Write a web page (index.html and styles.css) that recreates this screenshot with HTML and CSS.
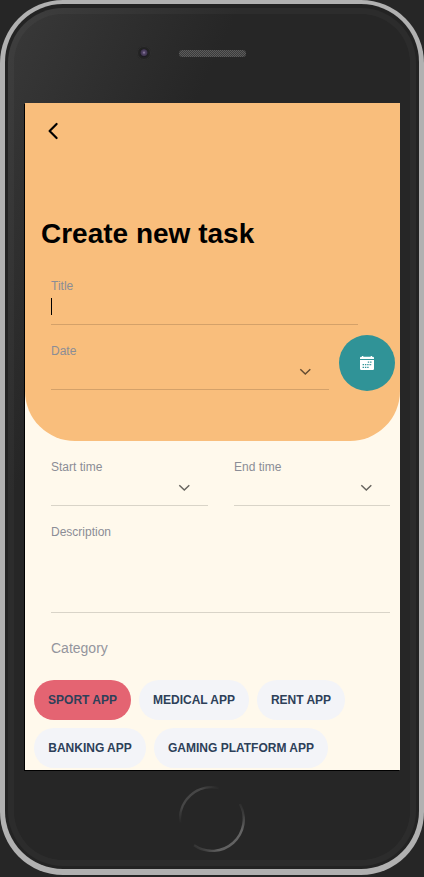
FILE: index.html
```html
<!DOCTYPE html>
<html lang="en">
<head>
<meta charset="utf-8">
<title>Create new task</title>
<link rel="stylesheet" href="styles.css">
</head>
<body>
<div class="phone">
  <div class="rim">
    <div class="body">
      <div class="top-bezel">
        <span class="camera"></span>
        <span class="speaker"></span>
      </div>
      <main class="screen">
        <header class="hero">
          <svg class="back" viewBox="0 0 12 18" fill="none" stroke="#000" stroke-width="2.2" stroke-linecap="round" stroke-linejoin="round"><path d="M9.6 2 L2.6 9 L9.6 16"/></svg>
          <h1>Create new task</h1>
          <div class="field title-field"><label>Title</label><span class="caret"></span></div>
          <div class="date-row">
            <div class="field select date-field"><label>Date</label>
              <svg class="chevron" viewBox="0 0 12 8"><path d="M1.3 1.3 L6.3 6 L11.3 1.3"/></svg></div>
            <button class="calendar" aria-label="Pick date">
              <svg viewBox="0 0 14 14"><path fill="#fff" d="M1.2.8H2V0h1.3v.8h7.4V0H12v.8h.8Q14 .8 14 2v1H0V2Q0 .8 1.2.8ZM0 4h14v8.8q0 1.2-1.2 1.2H1.2Q0 14 0 12.8Z"/><path stroke="#309397" stroke-width="1.3" stroke-dasharray="1.4 .9" d="M7.8 6.1H12M2.6 8.7H12M2.6 11.3H9.5"/></svg>
            </button>
          </div>
        </header>
        <section class="details">
          <div class="times">
            <div class="field select"><label>Start time</label>
              <svg class="chevron" viewBox="0 0 12 8"><path d="M1.3 1.3 L6.3 6 L11.3 1.3"/></svg></div>
            <div class="field select"><label>End time</label>
              <svg class="chevron" viewBox="0 0 12 8"><path d="M1.3 1.3 L6.3 6 L11.3 1.3"/></svg></div>
          </div>
          <div class="field description"><label>Description</label></div>
          <p class="category">Category</p>
          <div class="chips">
            <span class="chip active sport">SPORT APP</span>
            <span class="chip medical">MEDICAL APP</span>
            <span class="chip rent">RENT APP</span>
            <span class="chip banking">BANKING APP</span>
            <span class="chip gaming">GAMING PLATFORM APP</span>
          </div>
        </section>
      </main>
      <svg class="home" viewBox="0 0 66 66" fill="none" stroke-width="2.4">
        <defs>
          <linearGradient id="upper" x1="0" y1="1" x2="1" y2="0"><stop offset="0" stop-color="#262626"/><stop offset=".25" stop-color="#464646"/><stop offset=".75" stop-color="#464646"/><stop offset="1" stop-color="#262626"/></linearGradient>
          <linearGradient id="lower" x1="0" y1="1" x2="1" y2="0"><stop offset="0" stop-color="#262626"/><stop offset=".25" stop-color="#606060"/><stop offset=".7" stop-color="#646464"/><stop offset="1" stop-color="#262626"/></linearGradient>
        </defs>
        <path stroke="url(#upper)" d="M1.2 37A31.8 31.8 0 0 1 40 2"/>
        <path stroke="url(#lower)" d="M15 59.3A31.8 31.8 0 0 0 61 18"/>
      </svg>
    </div>
  </div>
</div>
</body>
</html>
```
FILE: styles.css
```css
* { box-sizing: border-box; }
body {
  margin: 0;
  height: 877px;
  overflow: hidden;
  background: #262626;
  font-family: "Liberation Sans", Arial, sans-serif;
}
.phone {
  width: 424px;
  height: 875px;
  padding: 4px 5px 6px;
  border-radius: 63px;
  background: #b1b1b1;
}
.rim {
  height: 865px;
  padding: 4px 3px 3px;
  border-radius: 58px;
  background: #232323;
}
.body {
  height: 858px;
  border: 6px solid rgba(255, 255, 255, .03);
  border-radius: 55px;
  background: linear-gradient(115deg, #393939 0, #262626 210px) border-box;
  display: flex;
  flex-direction: column;
}
.top-bezel {
  flex: 0 0 89px;
  display: flex;
  align-items: flex-start;
}
.camera {
  width: 14px;
  height: 14px;
  margin: 32px 0 0 123px;
  border: 3px solid #222;
  border-radius: 50%;
  outline: 1px solid #303030;
  outline-offset: -1px;
  background: radial-gradient(circle at 50% 45%, #9b8caa 0, #514267 1.5px, #40364f 3px, #1c1a22 4px);
}
.speaker {
  width: 67px;
  height: 7px;
  margin: 36px 0 0 28px;
  border-radius: 4px;
  background: repeating-conic-gradient(#5c5c5c 0 25%, #3b3b3b 0 50%) 0 0 / 2px 2px;
}
.screen {
  flex: 0 0 667px;
  width: 375px;
  margin-left: 11px;
  background: #fff9ec;
  box-shadow: -1px 1px 0 #000;
  overflow: hidden;
}
.hero {
  height: 338px;
  padding: 19px 0 0 16px;
  border-radius: 0 0 50px 50px;
  background: #f9be7c;
}
.back {
  display: block;
  width: 12px;
  height: 18px;
  margin-left: 6px;
}
h1 {
  margin: 78px 0 0;
  font-size: 28px;
  line-height: 32px;
}
.field {
  height: 65px;
  padding-top: 19px;
  border-bottom: 1px solid rgba(0, 0, 0, .15);
  color: #8b8d96;
}
.field label {
  display: block;
  font-size: 12px;
  line-height: 14px;
}
.title-field {
  width: 307px;
  height: 65px;
  margin: 10px 0 0 10px;
}
.caret {
  display: block;
  width: 1px;
  height: 17px;
  margin-top: 5px;
  background: #000;
}
.date-row {
  display: flex;
  align-items: flex-end;
  margin-left: 10px;
}
.date-field { width: 278px; }
.chevron {
  display: block;
  width: 12px;
  height: 8px;
  margin: 10px 18px 0 auto;
  fill: none;
  stroke: rgba(0, 0, 0, .6);
  stroke-width: 1.5;
}
.calendar {
  display: grid;
  place-items: center;
  width: 56px;
  height: 56px;
  margin: 0 0 -1px 10px;
  padding: 0;
  border: 0;
  border-radius: 50%;
  background: #309397;
}
.calendar svg {
  width: 14px;
  height: 14px;
}
.details { padding-left: 9px; }
.times {
  display: grid;
  grid-template-columns: 157px 156px;
  column-gap: 26px;
  margin-left: 17px;
}
.description {
  width: 339px;
  height: 107px;
  margin-left: 17px;
}
.category {
  margin: 27px 0 23px 17px;
  color: #94959d;
  font-size: 14px;
  line-height: 17px;
}
.chips {
  display: flex;
  flex-wrap: wrap;
  gap: 8px;
}
.chip {
  height: 40px;
  border-radius: 20px;
  background: #f3f4f8;
  color: #2d4059;
  font-size: 12px;
  font-weight: 700;
  line-height: 40px;
  text-align: center;
  white-space: nowrap;
}
.active { background: #e46472; }
.sport { width: 97px; }
.medical { width: 110px; }
.rent { width: 88px; }
.banking { width: 112px; }
.gaming { width: 174px; }
.home {
  flex: none;
  width: 66px;
  height: 66px;
  margin: 16px 0 0 165px;
}
```
